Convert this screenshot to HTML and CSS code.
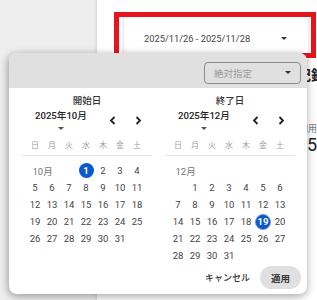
FILE: index.html
```html
<!DOCTYPE html>
<html lang="ja">
<head>
<meta charset="utf-8">
<title>期間指定</title>
<link rel="stylesheet" href="styles.css">
</head>
<body>
<div class="page">
  <aside class="sidebar"></aside>
  <main class="main">
    <div class="toolbar">
      <button class="range-btn"><span>2025/11/26 - 2025/11/28</span><span class="caret"></span></button>
    </div>
    <div class="bg-content">
      <div class="bg-title">記録一覧</div>
      <div class="bg-label">利用</div>
      <div class="bg-value">35</div>
    </div>
  </main>
</div>

<div class="highlight"></div>

<div class="popup">
  <div class="popup-head">
    <div class="mode-select"><span>絶対指定</span><span class="caret"></span></div>
  </div>
  <div class="popup-body">
    <section class="panel">
      <div class="panel-title">開始日</div>
      <div class="month-row">
        <div class="month-select"><span>2025年10月</span><span class="caret small"></span></div>
        <div class="nav">
          <span class="nav-btn"><svg width="7" height="9" viewBox="0 0 7 9"><polyline points="5.5,1 2,4.5 5.5,8" fill="none" stroke="#222" stroke-width="1.8"/></svg></span>
          <span class="nav-btn"><svg width="7" height="9" viewBox="0 0 7 9"><polyline points="1.5,1 5,4.5 1.5,8" fill="none" stroke="#222" stroke-width="1.8"/></svg></span>
        </div>
      </div>
      <div class="weekdays"><span>日</span><span>月</span><span>火</span><span>水</span><span>木</span><span>金</span><span>土</span></div>
      <div class="days">
        <span class="month-label span3">10月</span>
        <span class="sel"><b>1</b></span><span>2</span><span>3</span><span>4</span>
        <span>5</span><span>6</span><span>7</span><span>8</span><span>9</span><span>10</span><span>11</span>
        <span>12</span><span>13</span><span>14</span><span>15</span><span>16</span><span>17</span><span>18</span>
        <span>19</span><span>20</span><span>21</span><span>22</span><span>23</span><span>24</span><span>25</span>
        <span>26</span><span>27</span><span>28</span><span>29</span><span>30</span><span>31</span>
      </div>
    </section>
    <section class="panel">
      <div class="panel-title">終了日</div>
      <div class="month-row">
        <div class="month-select"><span>2025年12月</span><span class="caret small"></span></div>
        <div class="nav">
          <span class="nav-btn"><svg width="7" height="9" viewBox="0 0 7 9"><polyline points="5.5,1 2,4.5 5.5,8" fill="none" stroke="#222" stroke-width="1.8"/></svg></span>
          <span class="nav-btn"><svg width="7" height="9" viewBox="0 0 7 9"><polyline points="1.5,1 5,4.5 1.5,8" fill="none" stroke="#222" stroke-width="1.8"/></svg></span>
        </div>
      </div>
      <div class="weekdays"><span>日</span><span>月</span><span>火</span><span>水</span><span>木</span><span>金</span><span>土</span></div>
      <div class="days">
        <span class="month-label span7">12月</span>
        <span></span><span>1</span><span>2</span><span>3</span><span>4</span><span>5</span><span>6</span>
        <span>7</span><span>8</span><span>9</span><span>10</span><span>11</span><span>12</span><span>13</span>
        <span>14</span><span>15</span><span>16</span><span>17</span><span>18</span><span class="sel today"><b>19</b></span><span>20</span>
        <span>21</span><span>22</span><span>23</span><span>24</span><span>25</span><span>26</span><span>27</span>
        <span>28</span><span>29</span><span>30</span><span>31</span>
      </div>
    </section>
  </div>
  <div class="popup-foot">
    <span class="btn-text">キャンセル</span>
    <span class="btn-apply">適用</span>
  </div>
</div>
</body>
</html>
```

FILE: styles.css
```css
* { box-sizing: border-box; }
html, body { margin: 0; padding: 0; }
body {
  width: 317px;
  height: 300px;
  overflow: hidden;
  position: relative;
  font-family: "Roboto", "Noto Sans CJK JP", sans-serif;
  color: #333;
}
.page { display: flex; height: 300px; }
.sidebar { width: 97px; background: #eeeeee; flex: none; }
.main {
  flex: 1;
  background: #fff;
  box-shadow: -1px 0 3px rgba(0,0,0,0.12);
  overflow: hidden;
}
.toolbar { padding: 16px 0 0 27px; }
.range-btn {
  width: 184px;
  height: 44px;
  border: none;
  background: #fff;
  box-shadow: 0 1px 3px rgba(0,0,0,0.22);
  display: flex;
  align-items: center;
  justify-content: space-between;
  padding: 0 21px 0 20px;
  font-family: "Roboto", sans-serif;
  font-size: 9.3px;
  color: #444;
}
.caret {
  width: 0; height: 0;
  border-left: 3px solid transparent;
  border-right: 3px solid transparent;
  border-top: 3px solid #333;
}
.caret.small { border-top-color: #555; }
.bg-content { padding: 6px 0 0 200px; white-space: nowrap; }
.bg-title { font-size: 14px; font-weight: 700; color: #222; line-height: 18px; }
.bg-label { font-size: 9px; color: #777; margin-top: 38px; padding-left: 2px; }
.bg-value { font-size: 18px; color: #222; line-height: 20px; padding-left: 0; }

.highlight {
  position: absolute;
  left: 114px; top: 12px;
  width: 202px; height: 46px;
  border: 5px solid #e8141b;
}

.popup {
  position: absolute;
  left: 9px; top: 53px;
  width: 298px;
  background: #fff;
  border-radius: 8px;
  overflow: hidden;
  box-shadow: 0 3px 10px rgba(0,0,0,0.28), -2px 0 6px rgba(0,0,0,0.12);
}
.popup-head {
  height: 35px;
  background: #e0e0e0;
  display: flex;
  justify-content: flex-end;
  align-items: center;
  padding: 4px 6px 0 0;
}
.mode-select {
  width: 97px; height: 22px;
  border: 1px solid #8a8a8a;
  border-radius: 4px;
  display: flex;
  align-items: center;
  justify-content: space-between;
  padding: 0 9px 0 9px;
  font-size: 9.5px;
  color: #9a9a9a;
}
.popup-body { display: flex; gap: 13px; padding: 0 12px 0 13px; }
.panel { width: 130px; }
.panel-title {
  text-align: center;
  font-size: 9.5px;
  font-weight: 500;
  color: #333;
  line-height: 12px;
  margin-top: 7px;
}
.month-row {
  display: flex;
  align-items: center;
  margin-top: 3px;
  height: 20px;
  padding-left: 13px;
}
.month-select {
  display: flex;
  flex-direction: column;
  align-items: center;
  gap: 5px;
  font-size: 9.6px;
  font-weight: 500;
  color: #222;
  line-height: 12px;
}
.nav { margin-left: auto; display: flex; gap: 10px; padding-right: 6px; }
.nav-btn { width: 16px; display: flex; justify-content: center; align-items: center; }
.weekdays {
  display: grid;
  grid-template-columns: repeat(7, 17px);
  padding: 0 0 3px 4.5px;
  margin-top: 10px;
  border-bottom: 1px solid #e4e4e4;
  font-size: 8px;
  color: #9e9e9e;
  line-height: 12px;
  text-align: center;
}
.days {
  display: grid;
  grid-template-columns: repeat(7, 17px);
  grid-auto-rows: 17px;
  padding-left: 4.5px;
  margin-top: 6px;
  font-size: 9.5px;
  color: #444;
}
.days span { display: flex; align-items: center; justify-content: center; }
.days .month-label { justify-content: flex-start; padding-left: 6px; color: #757575; }
.days .span3 { grid-column: span 3; }
.days .span7 { grid-column: span 7; }
.days .sel b {
  width: 15px; height: 15px;
  border-radius: 50%;
  background: #0b57d0;
  color: #fff;
  font-weight: 700;
  display: flex; align-items: center; justify-content: center;
}
.days .today b {
  width: 16px; height: 16px;
  border: 1.5px solid #6f95e6;
  background: #0b57d0;
}
.popup-foot {
  display: flex;
  justify-content: flex-end;
  align-items: center;
  gap: 10px;
  padding: 2px 6px 5px 0;
}
.btn-text { font-size: 9px; font-weight: 500; color: #333; }
.btn-apply {
  width: 41px; height: 23px;
  border-radius: 12px;
  background: #e0e0e0;
  display: flex; align-items: center; justify-content: center;
  font-size: 9.5px; font-weight: 700; color: #333;
}
```
